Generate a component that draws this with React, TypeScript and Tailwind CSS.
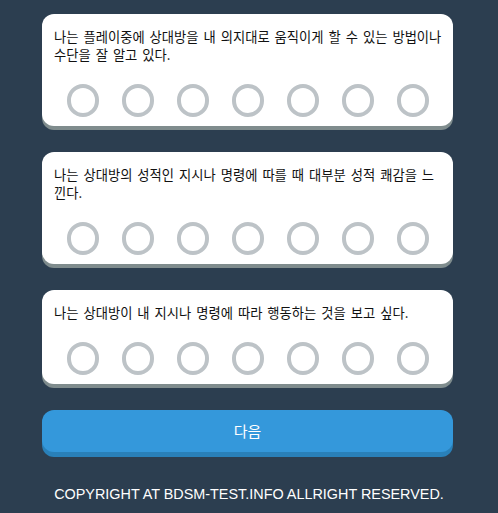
const QUESTIONS = [
  '나는 플레이중에 상대방을 내 의지대로 움직이게 할 수 있는 방법이나 수단을 잘 알고 있다.',
  '나는 상대방의 성적인 지시나 명령에 따를 때 대부분 성적 쾌감을 느낀다.',
  '나는 상대방이 내 지시나 명령에 따라 행동하는 것을 보고 싶다.',
];

const KR = { fontFamily: '"Noto Sans CJK KR", "Liberation Sans", sans-serif' };

function QuestionCard({ text }: { text: string }) {
  return (
    <div className="rounded-[12px] bg-white shadow-[0_4px_0_#7f8c8d] pt-[14px] pb-[9px]">
      <p className="pl-[12px] pr-[9px] text-[13.3px] leading-[18px] text-[#111] [word-spacing:2px]" style={KR}>
        {text}
      </p>
      <div className="mt-[20px] flex justify-around px-[13px]">
        {Array.from({ length: 7 }, (_, i) => (
          <button
            key={i}
            type="button"
            aria-label={`option ${i + 1}`}
            className="h-[33px] w-[32px] rounded-full border-4 border-[#bdc3c7] bg-white"
          />
        ))}
      </div>
    </div>
  );
}

export default function App() {
  return (
    <div className="min-h-[513px] w-full bg-[#2c3e50] pt-[14px]">
      <div className="ml-[42px] flex w-[411px] flex-col gap-[26px]">
        {QUESTIONS.map((q) => (
          <QuestionCard key={q} text={q} />
        ))}
      </div>
      <div className="ml-[42px] mt-[26px] w-[411px]">
        <button
          type="button"
          className="h-[42px] w-full rounded-[12px] bg-[#3498db] text-[15px] text-white shadow-[0_5px_0_#2980b9]"
          style={KR}
        >
          다음
        </button>
      </div>
      <p
        className="mt-[32px] text-center text-[14.4px] text-white"
        style={{ fontFamily: '"Liberation Sans", Arial, sans-serif' }}
      >
        COPYRIGHT AT BDSM-TEST.INFO ALLRIGHT RESERVED.
      </p>
    </div>
  );
}
